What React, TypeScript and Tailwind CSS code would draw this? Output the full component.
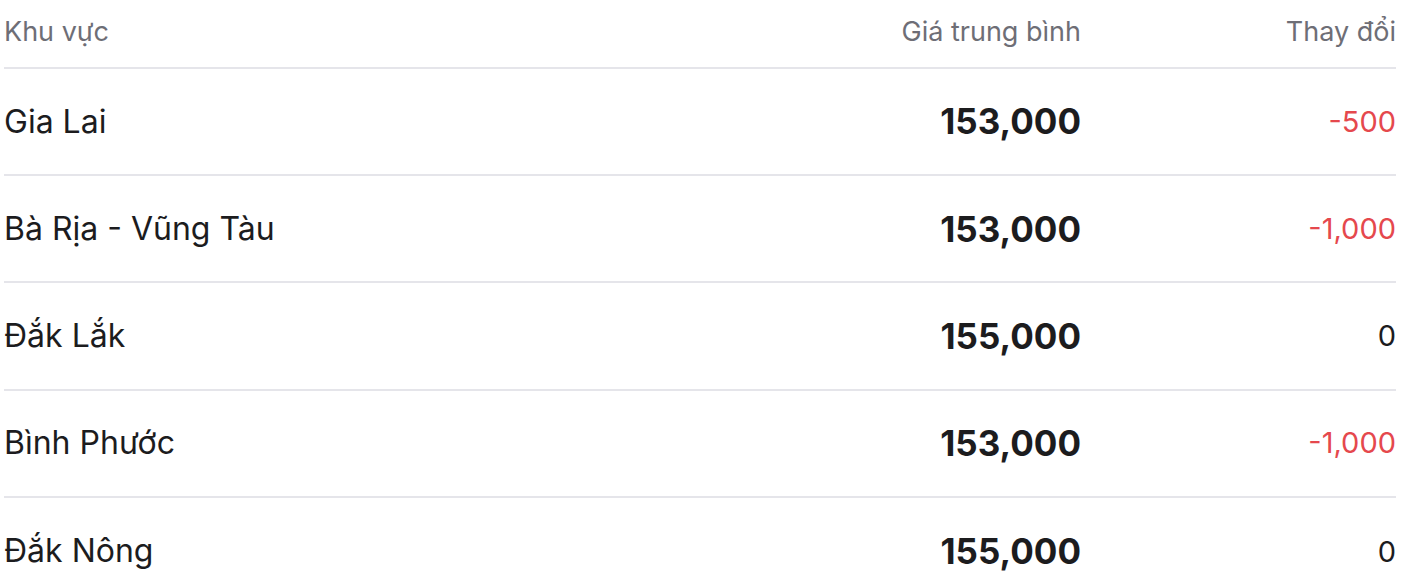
import React from "react";

const rows = [
  { name: "Gia Lai", price: "153,000", change: "-500" },
  { name: "Bà Rịa - Vũng Tàu", price: "153,000", change: "-1,000" },
  { name: "Đắk Lắk", price: "155,000", change: "0" },
  { name: "Bình Phước", price: "153,000", change: "-1,000" },
  { name: "Đắk Nông", price: "155,000", change: "0" },
];

export default function App() {
  return (
    <div
      className="w-[1406px] h-[582px] overflow-hidden bg-white px-[4px] pt-[16px]"
      style={{ fontFamily: "Inter, 'Noto Sans', sans-serif" }}
    >
      <div className="w-[1392px]">
        <div className="flex items-start h-[53px] border-b-2 border-[#e5e5ea] text-[27px] leading-[32px] text-[#6e6e76]">
          <div className="flex-1">Khu vực</div>
          <div className="w-[400px] text-right">Giá trung bình</div>
          <div className="w-[315px] text-right">Thay đổi</div>
        </div>
        {rows.map((r, i) => (
          <div
            key={i}
            className={`flex items-center h-[107.2px] ${i < rows.length - 1 ? "border-b-2 border-[#e5e5ea]" : ""}`}
          >
            <div className="flex-1 text-[32px] text-[#1c1c1e]">{r.name}</div>
            <div className="w-[400px] text-right text-[35px] font-bold text-[#1c1c1e]">{r.price}</div>
            <div
              className={`w-[315px] text-right text-[29px] ${r.change === "0" ? "text-[#1c1c1e]" : "text-[#e5484d]"}`}
            >
              {r.change}
            </div>
          </div>
        ))}
      </div>
    </div>
  );
}
